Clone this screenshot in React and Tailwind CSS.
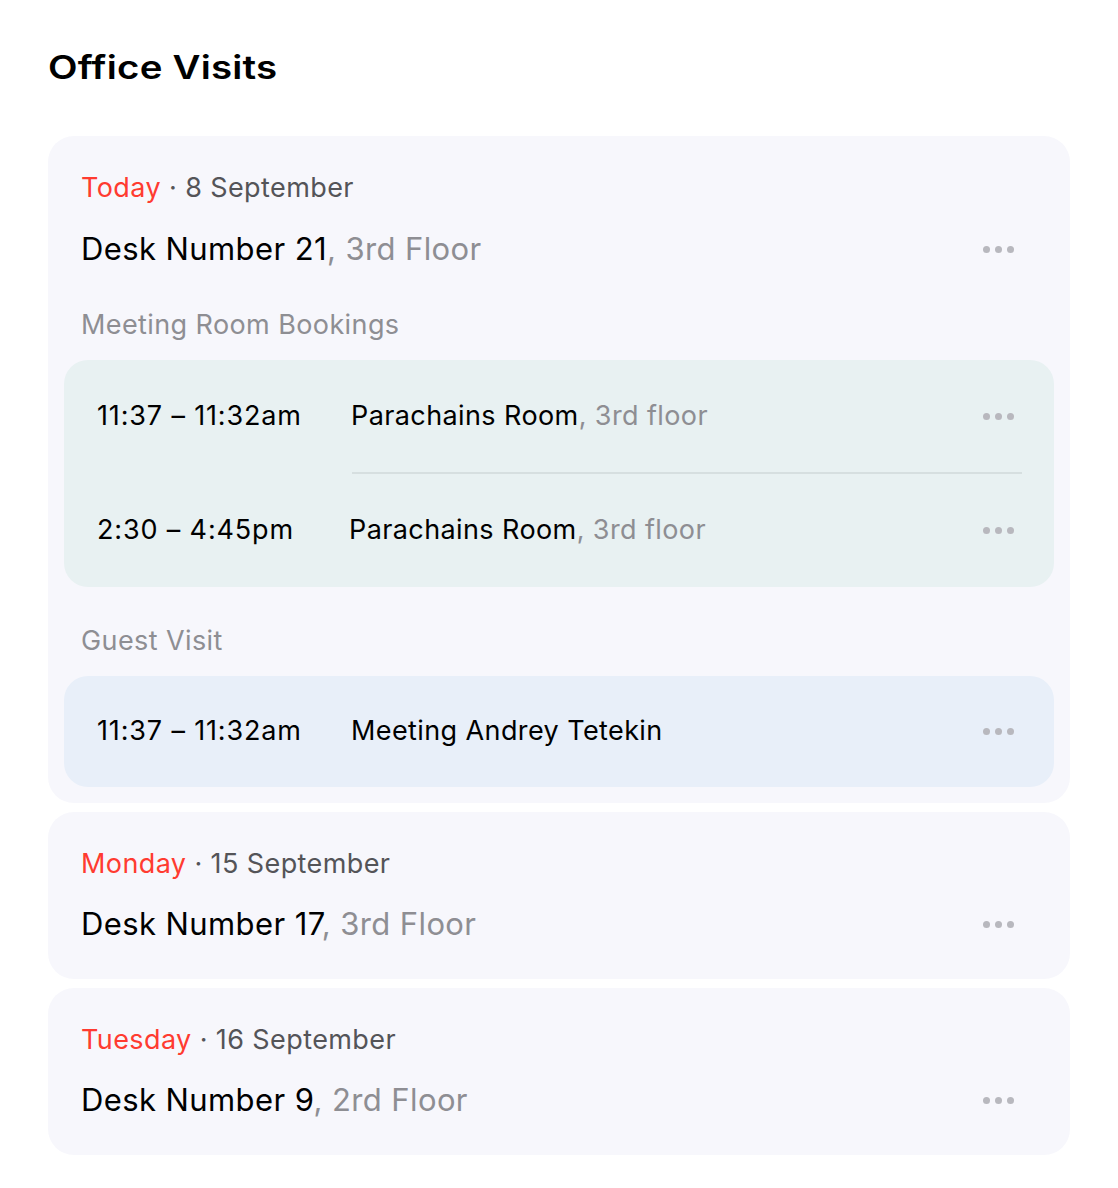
import React from "react";

const Dots = () => (
  <div className="flex items-center gap-[5px] shrink-0">
    <span className="w-[7px] h-[7px] rounded-full bg-[#b8b8be]" />
    <span className="w-[7px] h-[7px] rounded-full bg-[#b8b8be]" />
    <span className="w-[7px] h-[7px] rounded-full bg-[#b8b8be]" />
  </div>
);

const DateLine = ({ day, date }) => (
  <div className="h-[32px] flex items-center text-[27px] leading-[32px] tracking-[0.4px]">
    <span className="text-[#ff3b30]">{day}</span>
    <span className="text-[#545458]">&nbsp;· {date}</span>
  </div>
);

const DeskLine = ({ desk, floor }) => (
  <div className="h-[40px] flex items-center justify-between pr-[56px]">
    <div className="text-[31px] leading-[40px] tracking-[0.4px]">
      <span className="text-black">{desk}</span>
      <span className="text-[#8e8e93]">, {floor}</span>
    </div>
    <Dots />
  </div>
);

const Row = ({ time, name, floor, timeW, h }) => (
  <div className={`flex items-center pl-[33px] pr-[40px] ${h}`}>
    <div className={`${timeW} shrink-0 text-[27px] tracking-[0.85px] text-black`}>{time}</div>
    <div className="flex-1 text-[27px] tracking-[0.4px]">
      <span className="text-black">{name}</span>
      {floor && <span className="text-[#8e8e93]">, {floor}</span>}
    </div>
    <Dots />
  </div>
);

export default function App() {
  return (
    <div
      className="w-[1118px] h-[1188px] bg-white pl-[48px] pr-[48px]"
      style={{ fontFamily: "Inter, 'Noto Sans', sans-serif" }}
    >
      <div className="pt-[48px] h-[136px]">
        <h1 className="inline-block origin-left scale-x-[1.2] text-[32px] leading-[40px] font-semibold text-black tracking-[0.2px]">
          Office Visits
        </h1>
      </div>

      <div className="flex flex-col gap-[9px]">
        {/* Card 1 */}
        <div className="rounded-[26px] bg-[#f7f7fc] pt-[36px] pb-[16px]">
          <div className="pl-[33px]">
            <DateLine day="Today" date="8 September" />
            <div className="h-[25px]" />
            <DeskLine desk="Desk Number 21" floor="3rd Floor" />
          </div>
          <div className="pl-[33px] mt-[40px] h-[32px] flex items-center text-[27px] tracking-[0.4px] text-[#8e8e93]">
            Meeting Room Bookings
          </div>
          <div className="mx-[16px] mt-[19px] rounded-[24px] bg-[#e8f1f2]">
            <Row time="11:37 – 11:32am" name="Parachains Room" floor="3rd floor" timeW="w-[254px]" h="h-[112px]" />
            <div className="ml-[288px] mr-[32px] h-[2px] bg-[#d6dfe0]" />
            <Row time="2:30 – 4:45pm" name="Parachains Room" floor="3rd floor" timeW="w-[252px]" h="h-[113px]" />
          </div>
          <div className="pl-[33px] mt-[38px] h-[32px] flex items-center text-[27px] tracking-[0.4px] text-[#8e8e93]">
            Guest Visit
          </div>
          <div className="mx-[16px] mt-[19px] rounded-[24px] bg-[#e8eff9]">
            <Row time="11:37 – 11:32am" name="Meeting Andrey Tetekin" timeW="w-[254px]" h="h-[111px]" />
          </div>
        </div>

        {/* Card 2 */}
        <div className="rounded-[26px] bg-[#f7f7fc] pt-[36px] pb-[35px] pl-[33px] h-[167px]">
          <DateLine day="Monday" date="15 September" />
          <div className="h-[24px]" />
          <DeskLine desk="Desk Number 17" floor="3rd Floor" />
        </div>

        {/* Card 3 */}
        <div className="rounded-[26px] bg-[#f7f7fc] pt-[36px] pb-[35px] pl-[33px] h-[167px]">
          <DateLine day="Tuesday" date="16 September" />
          <div className="h-[24px]" />
          <DeskLine desk="Desk Number 9" floor="2rd Floor" />
        </div>
      </div>
    </div>
  );
}
